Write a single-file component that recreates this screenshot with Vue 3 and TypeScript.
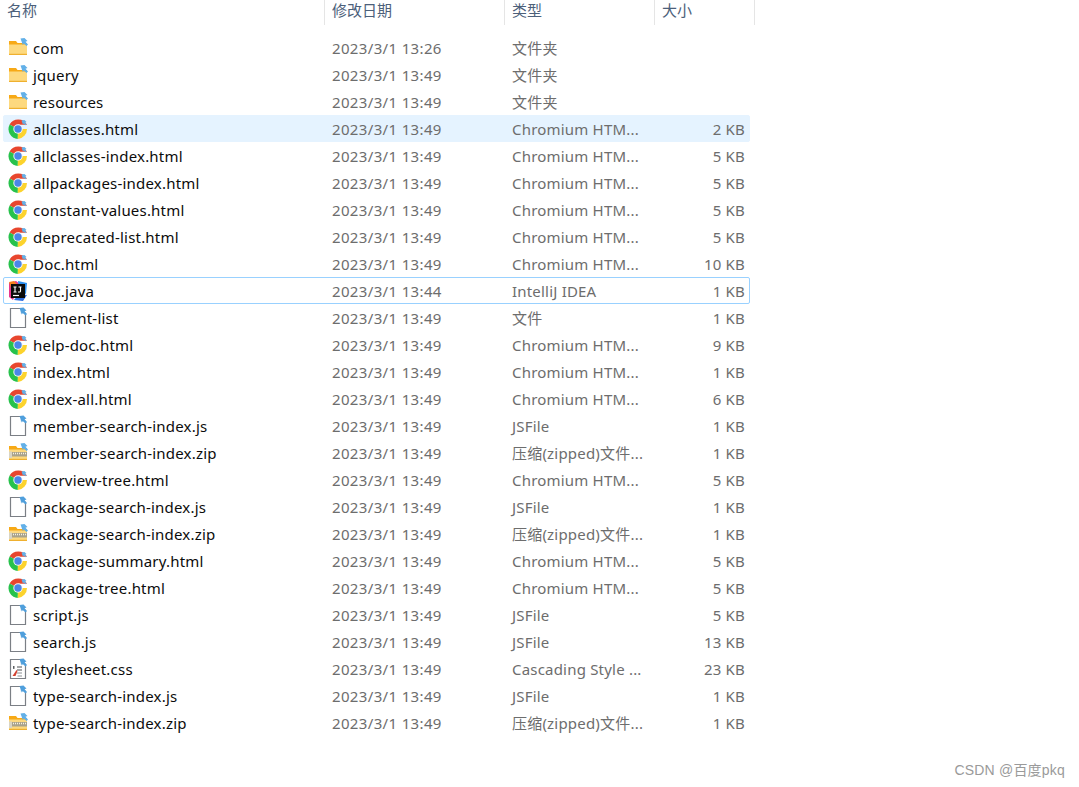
<script setup lang="ts">
type Kind = "folder" | "chrome" | "idea" | "doc" | "zip" | "css";

interface FileRow {
  name: string;
  date: string;
  type: string;
  size: string;
  kind: Kind;
  state?: string;
}

const chromeType = "Chromium HTM...";
const zipType = "压缩(zipped)文件...";

function row(name: string, time: string, type: string, size: string, kind: Kind, state = ""): FileRow {
  return { name, date: `2023/3/1 ${time}`, type, size, kind, state };
}

const files: FileRow[] = [
  row("com", "13:26", "文件夹", "", "folder"),
  row("jquery", "13:49", "文件夹", "", "folder"),
  row("resources", "13:49", "文件夹", "", "folder"),
  row("allclasses.html", "13:49", chromeType, "2 KB", "chrome", "hovered"),
  row("allclasses-index.html", "13:49", chromeType, "5 KB", "chrome"),
  row("allpackages-index.html", "13:49", chromeType, "5 KB", "chrome"),
  row("constant-values.html", "13:49", chromeType, "5 KB", "chrome"),
  row("deprecated-list.html", "13:49", chromeType, "5 KB", "chrome"),
  row("Doc.html", "13:49", chromeType, "10 KB", "chrome"),
  row("Doc.java", "13:44", "IntelliJ IDEA", "1 KB", "idea", "current"),
  row("element-list", "13:49", "文件", "1 KB", "doc"),
  row("help-doc.html", "13:49", chromeType, "9 KB", "chrome"),
  row("index.html", "13:49", chromeType, "1 KB", "chrome"),
  row("index-all.html", "13:49", chromeType, "6 KB", "chrome"),
  row("member-search-index.js", "13:49", "JSFile", "1 KB", "doc"),
  row("member-search-index.zip", "13:49", zipType, "1 KB", "zip"),
  row("overview-tree.html", "13:49", chromeType, "5 KB", "chrome"),
  row("package-search-index.js", "13:49", "JSFile", "1 KB", "doc"),
  row("package-search-index.zip", "13:49", zipType, "1 KB", "zip"),
  row("package-summary.html", "13:49", chromeType, "5 KB", "chrome"),
  row("package-tree.html", "13:49", chromeType, "5 KB", "chrome"),
  row("script.js", "13:49", "JSFile", "5 KB", "doc"),
  row("search.js", "13:49", "JSFile", "13 KB", "doc"),
  row("stylesheet.css", "13:49", "Cascading Style ...", "23 KB", "css"),
  row("type-search-index.js", "13:49", "JSFile", "1 KB", "doc"),
  row("type-search-index.zip", "13:49", zipType, "1 KB", "zip"),
];
</script>

<template>
  <div class="page">
    <div class="head">
      <div class="hcell name-col">名称</div>
      <div class="hcell date-col">修改日期</div>
      <div class="hcell type-col">类型</div>
      <div class="hcell size-col">大小</div>
    </div>

    <div class="list">
      <div v-for="f in files" :key="f.name" class="row" :class="f.state">
        <svg class="icon" width="22" height="22" viewBox="0 0 22 22">
          <template v-if="f.kind === 'folder' || f.kind === 'zip'">
            <path d="M2 4h7l1.500 2H20v12H2z" fill="#f7a916" />
            <path d="M2 7.500h18V18H2z" fill="#fdd97f" />
            <path d="M2 16.800h18V18H2z" fill="#efb02f" />
            <template v-if="f.kind === 'zip'">
              <path d="M2 10h18v4.500H2z" fill="#a8a28c" />
              <path d="M4 11.500h16" stroke="#f6f2e2" stroke-width="1.600" stroke-dasharray="1 1" />
              <path d="M2 9.500h3v6.500H2z" fill="#d9d4c2" />
            </template>
            <path d="M13.500 1.500l4-.5 3 3-2 .8 2.500 2.700-1.500 1.500-2.700-2.600-1 1.600z" fill="#62b0e8" />
          </template>

          <template v-else-if="f.kind === 'chrome'">
            <path d="M11 11L2.600 6.500A10 10 0 0 1 20 6.800H11z" fill="#e8462e" />
            <path d="M11 11L10.800 21A10 10 0 0 1 2.600 6.500z" fill="#27c24c" />
            <path d="M11 11H20A10 10 0 0 1 10.800 21z" fill="#fcd32d" />
            <circle cx="11" cy="11" r="4.700" fill="#f4f6f8" />
            <circle cx="11" cy="11" r="3.700" fill="#4a86e8" />
            <path d="M14.500 2.500l3-.5 2 2-1.500.5 1.500 1.700-1 1-1.700-1.700-.8 1.200z" fill="#62b0e8" />
          </template>

          <template v-else-if="f.kind === 'idea'">
            <path d="M2 3l7-2 4 3-7 16-4-3z" fill="#e8368f" />
            <path d="M11 1l9 2-1 11-7-3z" fill="#2b8ff0" />
            <path d="M7 20l5-6 8 1-4 6z" fill="#2f6fe0" />
            <path d="M2 2l5-1 3 3-6 4z" fill="#f5821f" />
            <rect x="4" y="4" width="14" height="14" fill="#0b0b0b" />
            <path d="M6 15.500h6" stroke="#fff" stroke-width="1.200" />
            <path d="M6.500 7h3M8 7v5M6.500 12h3M11.500 7h3M13.500 7v4.200q0 .8-1 .8h-1.500" stroke="#fff" stroke-width="1.100" fill="none" />
          </template>

          <template v-else>
            <path d="M3.500 1.500h10l5 5v14h-15z" fill="#fff" stroke="#7b7f85" stroke-width="1.200" />
            <path d="M13.500 1.500v5h5z" fill="#d8e3ee" />
            <path d="M12.500 1l4-.5 3 3-2 .8 2.500 2.700-1.500 1.500-2.700-2.600-1 1.600z" fill="#4f9fdc" />
            <template v-if="f.kind === 'css'">
              <path d="M6 9h1.500M6.800 8v3M10 9h5M10 12h5" stroke="#4b4e52" stroke-width="1.200" />
              <path d="M5.500 18l4-6 1 1-2 5z" fill="#d2402f" />
              <path d="M10 15h5M10.500 18h4.500" stroke="#8b8f94" />
            </template>
          </template>
        </svg>
        <div class="name">{{ f.name }}</div>
        <div class="cell date">{{ f.date }}</div>
        <div class="cell">{{ f.type }}</div>
        <div class="cell size">{{ f.size }}</div>
      </div>
    </div>

    <div class="mark">CSDN @百度pkq</div>
  </div>
</template>

<style scoped>
.page {
  position: relative;
  width: 1079px;
  height: 787px;
  overflow: hidden;
  background: #fff;
  font-family: "Noto Sans", "Noto Sans CJK SC", sans-serif;
  font-size: 15px;
}

.head {
  display: flex;
  height: 25px;
}

.hcell {
  box-sizing: border-box;
  height: 25px;
  line-height: 20px;
  color: #4c607a;
  border-right: 1px solid #e5e5e5;
}

.name-col {
  width: 325px;
  padding-left: 7px;
}

.date-col {
  width: 180px;
  padding-left: 7px;
}

.type-col {
  width: 150px;
  padding-left: 7px;
}

.size-col {
  width: 100px;
  padding-left: 7px;
}

.list {
  margin: 9px 0 0 3px;
  width: 747px;
}

.row {
  box-sizing: border-box;
  display: grid;
  grid-template-columns: 29px 299px 180px 130px 1fr;
  align-items: center;
  height: 27px;
  border: 1px solid transparent;
  border-radius: 2px;
  white-space: nowrap;
  letter-spacing: 0.2px;
}

.row.hovered {
  background: #e5f3ff;
  border-color: #e5f3ff;
}

.row.current {
  border-color: #99d1ff;
}

.icon {
  margin-left: 3px;
}

.name {
  color: #0c0c0c;
}

.cell {
  color: #6d6d6d;
}

.date {
  letter-spacing: 0.35px;
}

.size {
  text-align: right;
  padding-right: 4px;
}

.mark {
  position: absolute;
  right: 14px;
  bottom: 8px;
  font-size: 14px;
  letter-spacing: 0.2px;
  color: #9a9a9a;
  font-family: "Liberation Sans", "Noto Sans CJK SC", sans-serif;
}
</style>
